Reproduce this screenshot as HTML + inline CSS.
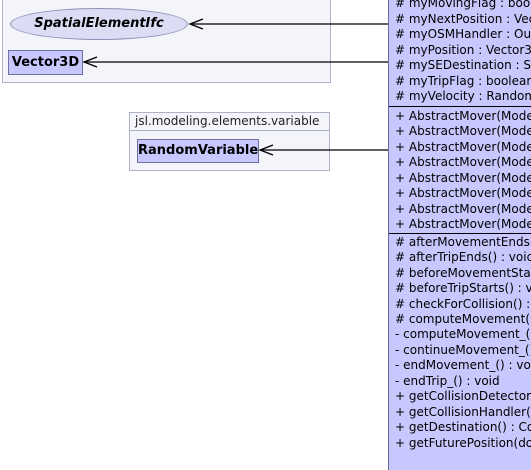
<!DOCTYPE html>
<html><head><style>
body{margin:0;width:531px;height:465px;background:#fff;position:relative;overflow:hidden;font-family:"DejaVu Sans","Liberation Sans",sans-serif;font-size:12px;color:#000}
.a{position:absolute}
.pkg{background:#f4f4fb;border:1px solid #b0b0c8;box-sizing:border-box}
.cls{background:#c8c8ff;border:1px solid #7070a0;box-sizing:border-box;font-weight:bold;font-size:13px;text-align:center}
.row{position:absolute;left:6px;height:15.4px;line-height:15.4px;white-space:nowrap}
.sep{position:absolute;left:0;right:0;height:1px;background:#000}
</style></head><body>
<div class="a pkg" style="left:2px;top:-2px;width:329px;height:85px"></div>
<div class="a" style="left:10px;top:8px;width:178px;height:32px;border-radius:50%;background:#dcdcf4;border:1px solid #9090b8;box-sizing:border-box;text-align:center;line-height:30px;font-style:italic;font-weight:bold;font-size:13px">SpatialElementIfc</div>
<div class="a cls" style="left:8px;top:50px;width:75px;height:25px;line-height:23px">Vector3D</div>
<div class="a pkg" style="left:129px;top:112px;width:201px;height:59px"></div>
<div class="a" style="left:129px;top:130px;width:201px;height:1px;background:#b0b0c8"></div>
<div class="a" style="left:135px;top:113px;font-size:12px;line-height:17px;color:#222">jsl.modeling.elements.variable</div>
<div class="a cls" style="left:137px;top:139px;width:122px;height:24px;line-height:22px">RandomVariable</div>
<svg class="a" style="left:0;top:0" width="531" height="465">
<g stroke="#000" stroke-width="1.3" fill="none">
<line x1="190" y1="24" x2="388" y2="24"/><polyline points="203,19 190,24 203,29"/>
<line x1="84" y1="62" x2="388" y2="62"/><polyline points="97,57 84,62 97,67"/>
<line x1="260" y1="150" x2="388" y2="150"/><polyline points="273,145 260,150 273,155"/>
</g></svg>
<div class="a" style="left:388px;top:-10px;width:143px;height:480px;background:#c8c8ff;border-left:1px solid #6a6a9a;box-sizing:border-box;overflow:hidden">
<div class="row" style="top:6px"># myMovingFlag : boolean</div>
<div class="row" style="top:22px"># myNextPosition : Vector3D</div>
<div class="row" style="top:37px"># myOSMHandler : OutputStream</div>
<div class="row" style="top:53px"># myPosition : Vector3D</div>
<div class="row" style="top:68px"># mySEDestination : Spatial</div>
<div class="row" style="top:84px"># myTripFlag : boolean</div>
<div class="row" style="top:99px"># myVelocity : RandomVariable</div>
<div class="sep" style="top:116px"></div>
<div class="row" style="top:119px">+ AbstractMover(Model)</div>
<div class="row" style="top:134px">+ AbstractMover(Model)</div>
<div class="row" style="top:150px">+ AbstractMover(Model)</div>
<div class="row" style="top:165px">+ AbstractMover(Model)</div>
<div class="row" style="top:181px">+ AbstractMover(Model)</div>
<div class="row" style="top:196px">+ AbstractMover(Model)</div>
<div class="row" style="top:212px">+ AbstractMover(Model)</div>
<div class="row" style="top:227px">+ AbstractMover(Model)</div>
<div class="sep" style="top:243px"></div>
<div class="row" style="top:245px"># afterMovementEnds() : void</div>
<div class="row" style="top:260px"># afterTripEnds() : void</div>
<div class="row" style="top:276px"># beforeMovementStarts()</div>
<div class="row" style="top:291px"># beforeTripStarts() : void</div>
<div class="row" style="top:307px"># checkForCollision() : bool</div>
<div class="row" style="top:322px"># computeMovement() : void</div>
<div class="row" style="top:337px">- computeMovement_() : void</div>
<div class="row" style="top:353px">- continueMovement_() : void</div>
<div class="row" style="top:368px">- endMovement_() : void</div>
<div class="row" style="top:384px">- endTrip_() : void</div>
<div class="row" style="top:399px">+ getCollisionDetector()</div>
<div class="row" style="top:415px">+ getCollisionHandler()</div>
<div class="row" style="top:430px">+ getDestination() : Coord</div>
<div class="row" style="top:446px">+ getFuturePosition(double)</div>
</div>
</body></html>
